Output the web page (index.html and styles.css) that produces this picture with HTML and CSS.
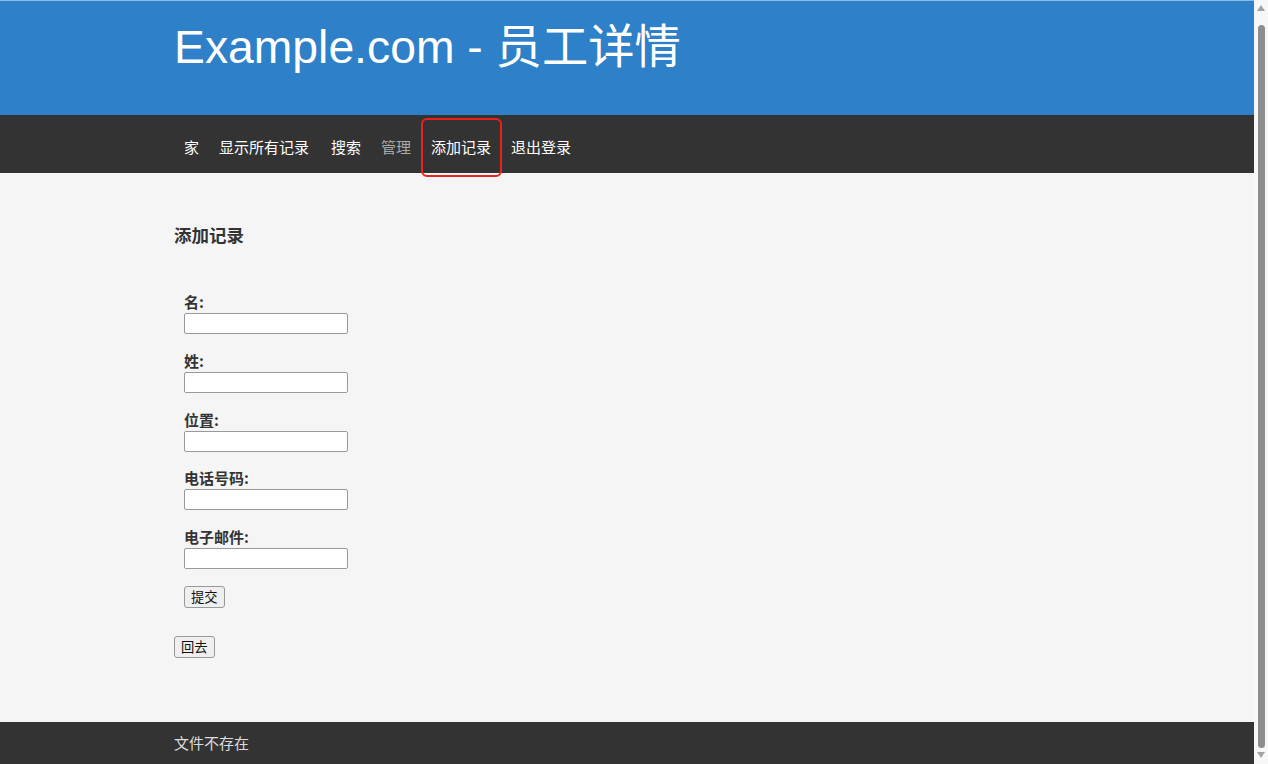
FILE: index.html
```html
<!DOCTYPE html>
<html lang="zh-CN">
<head>
  <meta charset="UTF-8" />
  <meta name="viewport" content="width=device-width, initial-scale=1.0"/>
  <title>添加记录 | Example.com</title>
  <link rel="stylesheet" href="styles.css">
</head>
<body>
  <div class="page">
    <header class="site-header">
      <div class="container">
        <h1>Example.com - 员工详情</h1>
      </div>
    </header>

    <nav class="site-nav">
      <div class="container nav-list">
        <a href="#">家</a>
        <a href="#" class="wide">显示所有记录</a>
        <a href="#">搜索</a>
        <a href="#" class="muted">管理</a>
        <a href="#" class="active">添加记录</a>
        <a href="#">退出登录</a>
      </div>
    </nav>

    <main class="site-main">
      <div class="container">
        <h3 class="page-title">添加记录</h3>

        <!-- 表单 -->
        <form class="record-form">
          <div class="field">
            <label for="fname">名:</label>
            <input type="text" id="fname" />
          </div>
          <div class="field">
            <label for="lname">姓:</label>
            <input type="text" id="lname" />
          </div>
          <div class="field">
            <label for="pos">位置:</label>
            <input type="text" id="pos" />
          </div>
          <div class="field">
            <label for="phone">电话号码:</label>
            <input type="text" id="phone" />
          </div>
          <div class="field">
            <label for="email">电子邮件:</label>
            <input type="text" id="email" />
          </div>
          <div class="field">
            <button type="submit">提交</button>
          </div>
        </form>

        <button type="button" class="back-btn">回去</button>
      </div>
    </main>

    <footer class="site-footer">
      <div class="container">文件不存在</div>
    </footer>
  </div>

  <!-- 滚动条 -->
  <div class="scrollbar">
    <span class="sb-up"></span>
    <span class="sb-thumb"></span>
    <span class="sb-down"></span>
  </div>
</body>
</html>
```

FILE: styles.css
```css
body {
  margin: 0;
  font-family: "Noto Sans CJK SC", "Noto Sans", sans-serif;
  font-size: 15px;
  color: #333;
  background-color: #f5f5f5;
}

.page {
  margin-right: 14px;
}

.container {
  width: 906px;
  margin: 0 auto;
}

.site-header {
  background-color: #2e80c8;
  border-top: 1px solid #8fbbe3;
  height: 115px;
  padding-top: 18px;
  box-sizing: border-box;
}

.site-header h1 {
  margin: 0;
  font-family: "Liberation Sans", "Noto Sans CJK SC", sans-serif;
  font-size: 46.3px;
  font-weight: normal;
  line-height: 56px;
  color: #fff;
}

.site-nav {
  background-color: #333;
  height: 58px;
}

.nav-list {
  display: flex;
}

.nav-list a {
  position: relative;
  display: block;
  padding: 22px 10px 16px;
  line-height: 20px;
  color: #fff;
  text-decoration: none;
}

.nav-list a.wide {
  padding-right: 12px;
}

.nav-list a.muted {
  color: #aaa;
}

.nav-list a.active::after {
  content: "";
  position: absolute;
  top: 3px;
  left: 0;
  right: -1px;
  bottom: -4px;
  border: 2px solid #e8231f;
  border-radius: 6px;
  z-index: 2;
}

.site-main {
  padding: 50px 0 64px;
}

.page-title {
  margin: 0;
  font-size: 17.5px;
  line-height: 24px;
  font-weight: bold;
}

.record-form {
  margin-top: 45px;
  padding-left: 10px;
}

.field {
  display: flex;
  flex-direction: column;
  align-items: flex-start;
  margin-bottom: 16.75px;
}

.field label {
  font-weight: bold;
  font-size: 15px;
  line-height: 20px;
  margin-bottom: 1px;
}

.field input {
  width: 164px;
  height: 21px;
  box-sizing: border-box;
  border: 1px solid #999;
  border-radius: 2px;
  background-color: #fff;
  padding: 1px 2px;
}

button {
  font-family: "Noto Sans CJK SC", sans-serif;
  font-size: 13.33px;
  line-height: 18px;
  padding: 1px 6px;
  color: #111;
  background-color: #efefef;
  border: 1px solid #999;
  border-radius: 3px;
}

.field:last-child {
  margin-bottom: 27px;
}

.site-footer {
  background-color: #333;
  color: #ddd;
  padding: 11px 0 29px;
  line-height: 20px;
}

.scrollbar {
  position: fixed;
  top: 0;
  right: 0;
  width: 14px;
  height: 100%;
  box-sizing: border-box;
  padding: 5px 0 6px;
  background-color: #f7f7f7;
  display: flex;
  flex-direction: column;
  align-items: center;
}

.sb-up {
  border-left: 4px solid transparent;
  border-right: 4px solid transparent;
  border-bottom: 6px solid #a3a3a3;
  margin-bottom: 14px;
}

.sb-thumb {
  flex: 1;
  width: 7px;
  background-color: #8d8d8d;
  border-radius: 4px;
  margin-bottom: 4px;
}

.sb-down {
  border-left: 4px solid transparent;
  border-right: 4px solid transparent;
  border-top: 6px solid #a3a3a3;
}
```
